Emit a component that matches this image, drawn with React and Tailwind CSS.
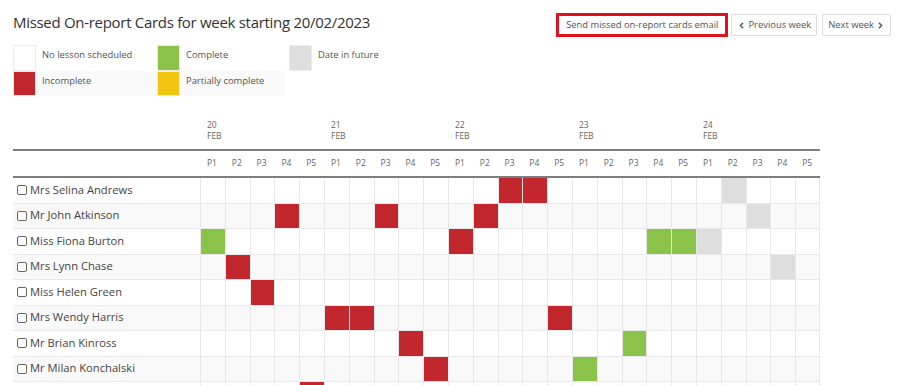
import { ChevronLeft, ChevronRight } from "lucide-react";

const fills = {
  r: "bg-[#c1272d]",
  g: "bg-[#8bc34a]",
  f: "bg-[#dedede]",
  y: "bg-[#f1c40f]",
};

const days = ["20", "21", "22", "23", "24"];
const periods = ["P1", "P2", "P3", "P4", "P5"];

const rows = [
  ["Mrs Selina Andrews", { 12: "r", 13: "r", 21: "f" }],
  ["Mr John Atkinson", { 3: "r", 7: "r", 11: "r", 22: "f" }],
  ["Miss Fiona Burton", { 0: "g", 10: "r", 18: "g", 19: "g", 20: "f" }],
  ["Mrs Lynn Chase", { 1: "r", 23: "f" }],
  ["Miss Helen Green", { 2: "r" }],
  ["Mrs Wendy Harris", { 5: "r", 6: "r", 14: "r" }],
  ["Mr Brian Kinross", { 8: "r", 17: "g" }],
  ["Mr Milan Konchalski", { 9: "r", 15: "g" }],
  ["", { 4: "r" }],
];

function Swatch({ color }) {
  return <div className={`w-[23px] h-full border border-[#ececec] ${color}`} />;
}

export default function App() {
  const cols = Array.from({ length: 25 }, (_, i) => i);

  return (
    <div className="w-[902px] h-[385px] overflow-hidden bg-white font-['Open_Sans',sans-serif] text-[#333] px-[13px]">
      {/* Title and buttons */}
      <div className="flex items-start justify-between pt-[13px] -mr-[2px]">
        <h1 className="text-[15px] tracking-[-0.3px] leading-[20px] -mt-[1px] text-[#333]">
          Missed On-report Cards for week starting 20/02/2023
        </h1>
        <div className="flex items-center">
          <button className="h-[24px] px-[7px] border-[3px] border-[#e0111f] bg-white text-[9.4px] text-[#555]">
            Send missed on-report cards email
          </button>
          <button className="ml-[3px] h-[22px] px-[5px] flex items-center gap-[2px] border border-[#dcdcdc] rounded-[2px] bg-white text-[9.4px] text-[#555]">
            <ChevronLeft size={9} strokeWidth={4} />
            Previous week
          </button>
          <button className="ml-[5px] h-[22px] px-[5px] flex items-center gap-[2px] border border-[#dcdcdc] rounded-[2px] bg-white text-[9.4px] text-[#555]">
            Next week
            <ChevronRight size={9} strokeWidth={4} />
          </button>
        </div>
      </div>

      {/* Legend */}
      <div className="mt-[8px] text-[9.4px] text-[#555]">
        <div className="flex h-[26px]">
          <Swatch color="bg-white" />
          <div className="w-[121px] pl-[6px] pt-[3px]">No lesson scheduled</div>
          <Swatch color="bg-[#8bc34a]" />
          <div className="w-[107px] pl-[6px] pt-[3px]">Complete</div>
          <div className="w-[2px]" />
          <Swatch color="bg-[#dedede]" />
          <div className="pl-[6px] pt-[3px]">Date in future</div>
        </div>
        <div className="flex h-[25px]">
          <Swatch color="bg-[#c1272d]" />
          <div className="w-[121px] pl-[6px] pt-[3px] bg-[#f9f9f9]">Incomplete</div>
          <Swatch color="bg-[#f1c40f]" />
          <div className="w-[105px] pl-[6px] pt-[3px] bg-[#f9f9f9]">Partially complete</div>
        </div>
      </div>

      {/* Grid */}
      <div className="mt-[15px] w-[807px]">
        <div className="flex h-[40px] border-b-2 border-[#7d7d7d]">
          <div className="w-[187px]" />
          {days.map((d) => (
            <div
              key={d}
              className="w-[124px] flex flex-col justify-end pb-[8px] pl-[7px] text-[8.5px] leading-[11px] text-[#666]"
            >
              <span>{d}</span>
              <span>FEB</span>
            </div>
          ))}
        </div>
        <div className="flex h-[27px] border-b-2 border-[#7d7d7d]">
          <div className="w-[187px]" />
          {cols.map((i) => (
            <div
              key={i}
              className="w-[24.8px] flex items-center pl-[7px] text-[8.5px] text-[#666]"
            >
              {periods[i % 5]}
            </div>
          ))}
        </div>
        {rows.map(([name, cells], r) => (
          <div
            key={r}
            className={`flex h-[25.5px] border-b border-[#e8e8e8] ${
              r % 2 === 1 ? "bg-[#f9f9f9]" : "bg-white"
            }`}
          >
            <div className="w-[187px] flex items-center pl-[4px] text-[11.2px] text-[#444]">
              <span className="w-[10px] h-[10px] border border-[#666] rounded-[2px] bg-white mr-[3px] shrink-0" />
              {name}
            </div>
            {cols.map((i) => (
              <div
                key={i}
                className={`w-[24.8px] h-full border-l border-[#e8e8e8] ${
                  i === 24 ? "border-r" : ""
                } ${cells[i] ? fills[cells[i]] : ""}`}
              />
            ))}
          </div>
        ))}
      </div>
    </div>
  );
}
